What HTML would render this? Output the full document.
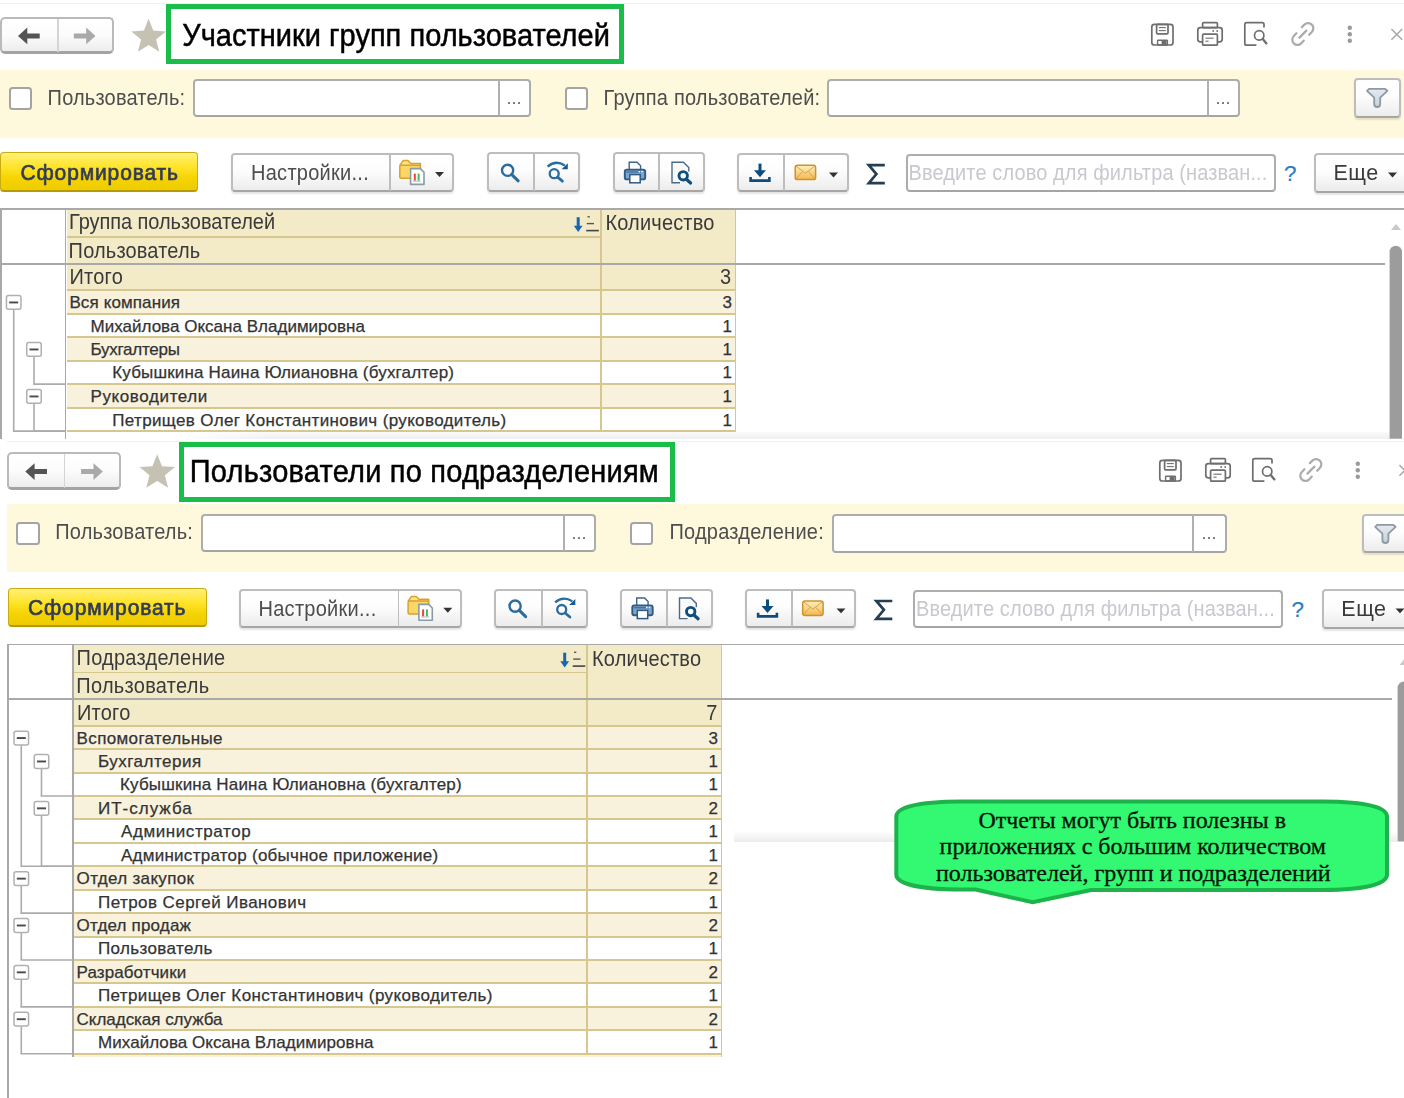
<!DOCTYPE html><html><head><meta charset="utf-8"><style>html,body{margin:0;padding:0;background:#fff;width:1404px;height:1098px;overflow:hidden;}body{position:relative;font-family:"Liberation Sans",sans-serif;}.a{position:absolute;}.t{position:absolute;white-space:pre;line-height:1;}svg{position:absolute;left:0;top:0;}</style></head><body>
<div class="a" style="left:0.00px;top:2.50px;width:1404.00px;height:1.00px;background:#f0f0f0;"></div>
<div class="a" style="left:7.00px;top:440.50px;width:1397.00px;height:1.00px;background:#f0f0f0;"></div>
<div class="a" style="left:0.00px;top:17.00px;width:113.50px;height:37.20px;box-sizing:border-box;border:2px solid #bababa;border-bottom:3px solid #a3a3a3;border-radius:5px;background:linear-gradient(#fff 0%,#fcfcfc 50%,#ededed 100%);"></div>
<div class="a" style="left:56.80px;top:18.50px;width:1.80px;height:33.70px;background:#d4d4d4;"></div>
<div class="a" style="left:6.80px;top:452.20px;width:114.60px;height:37.60px;box-sizing:border-box;border:2px solid #bababa;border-bottom:3px solid #a3a3a3;border-radius:5px;background:linear-gradient(#fff 0%,#fcfcfc 50%,#ededed 100%);"></div>
<div class="a" style="left:63.70px;top:453.70px;width:1.80px;height:34.10px;background:#d4d4d4;"></div>
<div class="a" style="left:166.00px;top:4.00px;width:457.50px;height:59.50px;box-sizing:border-box;border:5px solid #1bbd4a;"></div>
<div class="a" style="left:179.00px;top:442.00px;width:496.00px;height:60.00px;box-sizing:border-box;border:5px solid #1bbd4a;"></div>
<div class="a" style="left:0.00px;top:69.50px;width:1404.00px;height:68.70px;background:#fef9dc;"></div>
<div class="a" style="left:7.00px;top:504.40px;width:1397.00px;height:68.00px;background:#fef9dc;"></div>
<div class="a" style="left:8.80px;top:86.70px;width:23.00px;height:23.10px;box-sizing:border-box;border:2.2px solid #a4a4a4;border-radius:3.5px;background:#fff;"></div>
<div class="a" style="left:193.00px;top:78.80px;width:338.00px;height:38.60px;box-sizing:border-box;border:2.2px solid #adadad;border-bottom:2.4px solid #a5a5a5;border-radius:4px;background:#fff;"></div>
<div class="a" style="left:497.50px;top:79.80px;width:2.00px;height:36.60px;background:#b0b0b0;"></div>
<div class="a" style="left:508.05px;top:102.20px;width:1.80px;height:1.80px;background:#6e6e6e;border-radius:0.4px;"></div>
<div class="a" style="left:513.05px;top:102.20px;width:1.80px;height:1.80px;background:#6e6e6e;border-radius:0.4px;"></div>
<div class="a" style="left:518.05px;top:102.20px;width:1.80px;height:1.80px;background:#6e6e6e;border-radius:0.4px;"></div>
<div class="a" style="left:564.60px;top:86.70px;width:23.10px;height:23.10px;box-sizing:border-box;border:2.2px solid #a4a4a4;border-radius:3.5px;background:#fff;"></div>
<div class="a" style="left:827.40px;top:78.80px;width:413.00px;height:38.60px;box-sizing:border-box;border:2.2px solid #adadad;border-bottom:2.4px solid #a5a5a5;border-radius:4px;background:#fff;"></div>
<div class="a" style="left:1206.90px;top:79.80px;width:2.00px;height:36.60px;background:#b0b0b0;"></div>
<div class="a" style="left:1217.45px;top:102.20px;width:1.80px;height:1.80px;background:#6e6e6e;border-radius:0.4px;"></div>
<div class="a" style="left:1222.45px;top:102.20px;width:1.80px;height:1.80px;background:#6e6e6e;border-radius:0.4px;"></div>
<div class="a" style="left:1227.45px;top:102.20px;width:1.80px;height:1.80px;background:#6e6e6e;border-radius:0.4px;"></div>
<div class="a" style="left:1354.00px;top:77.70px;width:46.50px;height:40.10px;box-sizing:border-box;border:2px solid #bdbdbd;border-bottom:2.6px solid #a6a6a6;border-radius:4px;background:linear-gradient(#ffffff 0%,#fdfdfd 45%,#ececec 100%);box-shadow:0 1.5px 1.5px rgba(0,0,0,0.10);"></div>
<div class="a" style="left:16.20px;top:521.80px;width:23.50px;height:22.80px;box-sizing:border-box;border:2.2px solid #a4a4a4;border-radius:3.5px;background:#fff;"></div>
<div class="a" style="left:201.40px;top:513.80px;width:394.60px;height:38.60px;box-sizing:border-box;border:2.2px solid #adadad;border-bottom:2.4px solid #a5a5a5;border-radius:4px;background:#fff;"></div>
<div class="a" style="left:562.80px;top:514.80px;width:2.00px;height:36.60px;background:#b0b0b0;"></div>
<div class="a" style="left:573.20px;top:537.20px;width:1.80px;height:1.80px;background:#6e6e6e;border-radius:0.4px;"></div>
<div class="a" style="left:578.20px;top:537.20px;width:1.80px;height:1.80px;background:#6e6e6e;border-radius:0.4px;"></div>
<div class="a" style="left:583.20px;top:537.20px;width:1.80px;height:1.80px;background:#6e6e6e;border-radius:0.4px;"></div>
<div class="a" style="left:630.00px;top:522.30px;width:23.00px;height:22.70px;box-sizing:border-box;border:2.2px solid #a4a4a4;border-radius:3.5px;background:#fff;"></div>
<div class="a" style="left:832.40px;top:514.00px;width:394.20px;height:38.60px;box-sizing:border-box;border:2.2px solid #adadad;border-bottom:2.4px solid #a5a5a5;border-radius:4px;background:#fff;"></div>
<div class="a" style="left:1192.40px;top:515.00px;width:2.00px;height:36.60px;background:#b0b0b0;"></div>
<div class="a" style="left:1203.30px;top:537.40px;width:1.80px;height:1.80px;background:#6e6e6e;border-radius:0.4px;"></div>
<div class="a" style="left:1208.30px;top:537.40px;width:1.80px;height:1.80px;background:#6e6e6e;border-radius:0.4px;"></div>
<div class="a" style="left:1213.30px;top:537.40px;width:1.80px;height:1.80px;background:#6e6e6e;border-radius:0.4px;"></div>
<div class="a" style="left:1362.20px;top:513.80px;width:47.80px;height:39.00px;box-sizing:border-box;border:2px solid #bdbdbd;border-bottom:2.6px solid #a6a6a6;border-radius:4px;background:linear-gradient(#ffffff 0%,#fdfdfd 45%,#ececec 100%);box-shadow:0 1.5px 1.5px rgba(0,0,0,0.10);"></div>
<div class="a" style="left:0.00px;top:152.30px;width:198.00px;height:40.20px;box-sizing:border-box;border:1.6px solid #c9ad10;border-bottom:2.4px solid #b59a00;border-radius:4px;background:linear-gradient(#fff07a 0%,#ffe52e 35%,#f5d300 70%,#eecb00 100%);"></div>
<div class="a" style="left:231.00px;top:152.50px;width:223.00px;height:39.80px;box-sizing:border-box;border:2px solid #bdbdbd;border-bottom:2.6px solid #a6a6a6;border-radius:4px;background:linear-gradient(#ffffff 0%,#fdfdfd 45%,#ececec 100%);box-shadow:0 1.5px 1.5px rgba(0,0,0,0.10);"></div>
<div class="a" style="left:389.20px;top:153.50px;width:1.60px;height:37.80px;background:#bdbdbd;"></div>
<div class="a" style="left:487.00px;top:152.30px;width:92.80px;height:40.20px;box-sizing:border-box;border:2px solid #bdbdbd;border-bottom:2.6px solid #a6a6a6;border-radius:4px;background:linear-gradient(#ffffff 0%,#fdfdfd 45%,#ececec 100%);box-shadow:0 1.5px 1.5px rgba(0,0,0,0.10);"></div>
<div class="a" style="left:533.20px;top:153.30px;width:1.60px;height:38.20px;background:#bdbdbd;"></div>
<div class="a" style="left:612.50px;top:152.30px;width:92.00px;height:40.20px;box-sizing:border-box;border:2px solid #bdbdbd;border-bottom:2.6px solid #a6a6a6;border-radius:4px;background:linear-gradient(#ffffff 0%,#fdfdfd 45%,#ececec 100%);box-shadow:0 1.5px 1.5px rgba(0,0,0,0.10);"></div>
<div class="a" style="left:658.20px;top:153.30px;width:1.60px;height:38.20px;background:#bdbdbd;"></div>
<div class="a" style="left:737.00px;top:152.50px;width:111.50px;height:39.80px;box-sizing:border-box;border:2px solid #bdbdbd;border-bottom:2.6px solid #a6a6a6;border-radius:4px;background:linear-gradient(#ffffff 0%,#fdfdfd 45%,#ececec 100%);box-shadow:0 1.5px 1.5px rgba(0,0,0,0.10);"></div>
<div class="a" style="left:783.40px;top:153.50px;width:1.60px;height:37.80px;background:#bdbdbd;"></div>
<div class="a" style="left:905.50px;top:154.20px;width:370.00px;height:38.20px;box-sizing:border-box;border:2.2px solid #adadad;border-bottom:2.4px solid #a5a5a5;border-radius:4px;background:#fff;"></div>
<div class="a" style="left:1313.60px;top:152.80px;width:100.40px;height:40.20px;box-sizing:border-box;border:2px solid #bdbdbd;border-bottom:2.6px solid #a6a6a6;border-radius:4px;background:linear-gradient(#ffffff 0%,#fdfdfd 45%,#ececec 100%);box-shadow:0 1.5px 1.5px rgba(0,0,0,0.10);"></div>
<div class="a" style="left:7.50px;top:587.80px;width:199.30px;height:39.70px;box-sizing:border-box;border:1.6px solid #c9ad10;border-bottom:2.4px solid #b59a00;border-radius:4px;background:linear-gradient(#fff07a 0%,#ffe52e 35%,#f5d300 70%,#eecb00 100%);"></div>
<div class="a" style="left:238.60px;top:588.50px;width:223.60px;height:39.00px;box-sizing:border-box;border:2px solid #bdbdbd;border-bottom:2.6px solid #a6a6a6;border-radius:4px;background:linear-gradient(#ffffff 0%,#fdfdfd 45%,#ececec 100%);box-shadow:0 1.5px 1.5px rgba(0,0,0,0.10);"></div>
<div class="a" style="left:397.50px;top:589.50px;width:1.60px;height:37.00px;background:#bdbdbd;"></div>
<div class="a" style="left:494.40px;top:588.50px;width:93.30px;height:39.50px;box-sizing:border-box;border:2px solid #bdbdbd;border-bottom:2.6px solid #a6a6a6;border-radius:4px;background:linear-gradient(#ffffff 0%,#fdfdfd 45%,#ececec 100%);box-shadow:0 1.5px 1.5px rgba(0,0,0,0.10);"></div>
<div class="a" style="left:541.40px;top:589.50px;width:1.60px;height:37.50px;background:#bdbdbd;"></div>
<div class="a" style="left:619.50px;top:588.50px;width:93.00px;height:39.50px;box-sizing:border-box;border:2px solid #bdbdbd;border-bottom:2.6px solid #a6a6a6;border-radius:4px;background:linear-gradient(#ffffff 0%,#fdfdfd 45%,#ececec 100%);box-shadow:0 1.5px 1.5px rgba(0,0,0,0.10);"></div>
<div class="a" style="left:666.20px;top:589.50px;width:1.60px;height:37.50px;background:#bdbdbd;"></div>
<div class="a" style="left:745.00px;top:588.50px;width:111.00px;height:39.50px;box-sizing:border-box;border:2px solid #bdbdbd;border-bottom:2.6px solid #a6a6a6;border-radius:4px;background:linear-gradient(#ffffff 0%,#fdfdfd 45%,#ececec 100%);box-shadow:0 1.5px 1.5px rgba(0,0,0,0.10);"></div>
<div class="a" style="left:791.00px;top:589.50px;width:1.60px;height:37.50px;background:#bdbdbd;"></div>
<div class="a" style="left:913.00px;top:589.90px;width:370.00px;height:38.20px;box-sizing:border-box;border:2.2px solid #adadad;border-bottom:2.4px solid #a5a5a5;border-radius:4px;background:#fff;"></div>
<div class="a" style="left:1321.90px;top:588.50px;width:98.10px;height:40.10px;box-sizing:border-box;border:2px solid #bdbdbd;border-bottom:2.6px solid #a6a6a6;border-radius:4px;background:linear-gradient(#ffffff 0%,#fdfdfd 45%,#ececec 100%);box-shadow:0 1.5px 1.5px rgba(0,0,0,0.10);"></div>
<div class="a" style="left:0.00px;top:208.40px;width:1404.00px;height:1.60px;background:#a9a9a9;"></div>
<div class="a" style="left:66.50px;top:210.00px;width:669.10px;height:52.70px;background:#f3ebc8;"></div>
<div class="a" style="left:66.50px;top:236.30px;width:534.70px;height:1.60px;background:#d6c78e;"></div>
<div class="a" style="left:66.50px;top:264.70px;width:669.10px;height:25.40px;background:#f3ebc8;"></div>
<div class="a" style="left:66.50px;top:290.10px;width:669.10px;height:23.50px;background:#f8f1dc;"></div>
<div class="a" style="left:66.50px;top:289.10px;width:669.10px;height:2.00px;background:#d6c78e;"></div>
<div class="a" style="left:66.50px;top:312.60px;width:669.10px;height:2.00px;background:#d6c78e;"></div>
<div class="a" style="left:66.50px;top:337.10px;width:669.10px;height:23.50px;background:#f8f1dc;"></div>
<div class="a" style="left:66.50px;top:336.10px;width:669.10px;height:2.00px;background:#d6c78e;"></div>
<div class="a" style="left:66.50px;top:359.60px;width:669.10px;height:2.00px;background:#d6c78e;"></div>
<div class="a" style="left:66.50px;top:384.10px;width:669.10px;height:23.50px;background:#f8f1dc;"></div>
<div class="a" style="left:66.50px;top:383.10px;width:669.10px;height:2.00px;background:#d6c78e;"></div>
<div class="a" style="left:66.50px;top:406.60px;width:669.10px;height:2.00px;background:#d6c78e;"></div>
<div class="a" style="left:66.50px;top:430.10px;width:669.10px;height:2.00px;background:#d6c78e;"></div>
<div class="a" style="left:600.20px;top:210.00px;width:2.00px;height:221.10px;background:#d6c78e;"></div>
<div class="a" style="left:734.60px;top:210.00px;width:1.60px;height:222.10px;background:#d6c78e;"></div>
<div class="a" style="left:0.00px;top:262.70px;width:1385.00px;height:2.00px;background:#a9a9a9;"></div>
<div class="a" style="left:0.00px;top:209.20px;width:1.50px;height:229.50px;background:#a9a9a9;"></div>
<div class="a" style="left:64.70px;top:209.20px;width:1.60px;height:229.50px;background:#a9a9a9;"></div>
<div class="a" style="left:7.00px;top:643.60px;width:1397.00px;height:1.60px;background:#a9a9a9;"></div>
<div class="a" style="left:74.00px;top:645.20px;width:647.70px;height:53.20px;background:#f3ebc8;"></div>
<div class="a" style="left:74.00px;top:671.90px;width:513.40px;height:1.60px;background:#d6c78e;"></div>
<div class="a" style="left:74.00px;top:700.40px;width:647.70px;height:25.30px;background:#f3ebc8;"></div>
<div class="a" style="left:74.00px;top:725.70px;width:647.70px;height:23.43px;background:#f8f1dc;"></div>
<div class="a" style="left:74.00px;top:724.70px;width:647.70px;height:2.00px;background:#d6c78e;"></div>
<div class="a" style="left:74.00px;top:749.13px;width:647.70px;height:23.43px;background:#f8f1dc;"></div>
<div class="a" style="left:74.00px;top:748.13px;width:647.70px;height:2.00px;background:#d6c78e;"></div>
<div class="a" style="left:74.00px;top:771.56px;width:647.70px;height:2.00px;background:#d6c78e;"></div>
<div class="a" style="left:74.00px;top:795.99px;width:647.70px;height:23.43px;background:#f8f1dc;"></div>
<div class="a" style="left:74.00px;top:794.99px;width:647.70px;height:2.00px;background:#d6c78e;"></div>
<div class="a" style="left:74.00px;top:818.42px;width:647.70px;height:2.00px;background:#d6c78e;"></div>
<div class="a" style="left:74.00px;top:841.85px;width:647.70px;height:2.00px;background:#d6c78e;"></div>
<div class="a" style="left:74.00px;top:866.28px;width:647.70px;height:23.43px;background:#f8f1dc;"></div>
<div class="a" style="left:74.00px;top:865.28px;width:647.70px;height:2.00px;background:#d6c78e;"></div>
<div class="a" style="left:74.00px;top:888.71px;width:647.70px;height:2.00px;background:#d6c78e;"></div>
<div class="a" style="left:74.00px;top:913.14px;width:647.70px;height:23.43px;background:#f8f1dc;"></div>
<div class="a" style="left:74.00px;top:912.14px;width:647.70px;height:2.00px;background:#d6c78e;"></div>
<div class="a" style="left:74.00px;top:935.57px;width:647.70px;height:2.00px;background:#d6c78e;"></div>
<div class="a" style="left:74.00px;top:960.00px;width:647.70px;height:23.43px;background:#f8f1dc;"></div>
<div class="a" style="left:74.00px;top:959.00px;width:647.70px;height:2.00px;background:#d6c78e;"></div>
<div class="a" style="left:74.00px;top:982.43px;width:647.70px;height:2.00px;background:#d6c78e;"></div>
<div class="a" style="left:74.00px;top:1006.86px;width:647.70px;height:23.43px;background:#f8f1dc;"></div>
<div class="a" style="left:74.00px;top:1005.86px;width:647.70px;height:2.00px;background:#d6c78e;"></div>
<div class="a" style="left:74.00px;top:1029.29px;width:647.70px;height:2.00px;background:#d6c78e;"></div>
<div class="a" style="left:74.00px;top:1052.72px;width:647.70px;height:2.00px;background:#d6c78e;"></div>
<div class="a" style="left:74.00px;top:1054.72px;width:647.70px;height:2.00px;background:#f8f1dc;"></div>
<div class="a" style="left:586.40px;top:645.20px;width:2.00px;height:408.52px;background:#d6c78e;"></div>
<div class="a" style="left:720.70px;top:645.20px;width:1.60px;height:411.52px;background:#d6c78e;"></div>
<div class="a" style="left:7.00px;top:698.40px;width:1385.40px;height:2.00px;background:#a9a9a9;"></div>
<div class="a" style="left:7.00px;top:644.40px;width:1.50px;height:453.60px;background:#a9a9a9;"></div>
<div class="a" style="left:72.20px;top:644.40px;width:1.60px;height:412.30px;background:#a9a9a9;"></div>
<div class="a" style="left:180.00px;top:432.00px;width:1209.60px;height:6.70px;background:linear-gradient(#fafafa,#efefef);-webkit-mask-image:linear-gradient(to right,transparent,#000 90px);"></div>
<div class="a" style="left:734.00px;top:831.00px;width:663.00px;height:10.60px;background:linear-gradient(rgba(240,240,240,0),#ececec);"></div>
<svg width="1404" height="1098" viewBox="0 0 1404 1098"><polygon points="1388,172.6 1397,172.6 1392.5,177.4" fill="#333"/><polygon points="1395.5,608.4 1404.5,608.4 1400,613.2" fill="#333"/><g transform="translate(574,216)"><line x1="4.2" y1="1.2" x2="4.2" y2="11" stroke="#1a66ad" stroke-width="3"/><polygon points="-0.2,9.8 8.6,9.8 4.2,16" fill="#1a66ad"/><line x1="13.5" y1="0.8" x2="15.8" y2="0.8" stroke="#555" stroke-width="1.4"/><line x1="12.7" y1="7.6" x2="20" y2="7.6" stroke="#555" stroke-width="1.4"/><line x1="12.2" y1="14.6" x2="24.8" y2="14.6" stroke="#444" stroke-width="1.6"/></g><line x1="13.7" y1="309.8" x2="13.7" y2="431.1" stroke="#ababab" stroke-width="1.6"/><line x1="12.899999999999999" y1="431.1" x2="65.5" y2="431.1" stroke="#ababab" stroke-width="1.6"/><rect x="6.45" y="295.55" width="14.5" height="13.8" rx="2" fill="#fff" stroke="#b0b0b0" stroke-width="1.5"/><line x1="9.2" y1="302.45" x2="18.2" y2="302.45" stroke="#4a4a4a" stroke-width="1.9"/><line x1="34" y1="356.8" x2="34" y2="384.1" stroke="#ababab" stroke-width="1.6"/><line x1="33.2" y1="384.1" x2="65.5" y2="384.1" stroke="#ababab" stroke-width="1.6"/><rect x="26.75" y="342.55" width="14.5" height="13.8" rx="2" fill="#fff" stroke="#b0b0b0" stroke-width="1.5"/><line x1="29.5" y1="349.45" x2="38.5" y2="349.45" stroke="#4a4a4a" stroke-width="1.9"/><line x1="34" y1="403.8" x2="34" y2="431.1" stroke="#ababab" stroke-width="1.6"/><line x1="33.2" y1="431.1" x2="65.5" y2="431.1" stroke="#ababab" stroke-width="1.6"/><rect x="26.75" y="389.55" width="14.5" height="13.8" rx="2" fill="#fff" stroke="#b0b0b0" stroke-width="1.5"/><line x1="29.5" y1="396.45" x2="38.5" y2="396.45" stroke="#4a4a4a" stroke-width="1.9"/><polygon points="1391,230 1401,230 1396.0,224" fill="#c9c9c9"/><path d="M1389.6,438.7 L1389.6,251.90000000000003 A6.2000000000000455,6.2000000000000455 0 0 1 1402,251.90000000000003 L1402,438.7 Z" fill="#9c9c9c"/><g transform="translate(560.5,651.5)"><line x1="4.2" y1="1.2" x2="4.2" y2="11" stroke="#1a66ad" stroke-width="3"/><polygon points="-0.2,9.8 8.6,9.8 4.2,16" fill="#1a66ad"/><line x1="13.5" y1="0.8" x2="15.8" y2="0.8" stroke="#555" stroke-width="1.4"/><line x1="12.7" y1="7.6" x2="20" y2="7.6" stroke="#555" stroke-width="1.4"/><line x1="12.2" y1="14.6" x2="24.8" y2="14.6" stroke="#444" stroke-width="1.6"/></g><line x1="21.3" y1="745.4000000000001" x2="21.3" y2="866.28" stroke="#ababab" stroke-width="1.6"/><line x1="20.5" y1="866.28" x2="73" y2="866.28" stroke="#ababab" stroke-width="1.6"/><rect x="14.05" y="731.1500000000001" width="14.5" height="13.8" rx="2" fill="#fff" stroke="#b0b0b0" stroke-width="1.5"/><line x1="16.8" y1="738.0500000000001" x2="25.8" y2="738.0500000000001" stroke="#4a4a4a" stroke-width="1.9"/><line x1="41.5" y1="768.83" x2="41.5" y2="795.99" stroke="#ababab" stroke-width="1.6"/><line x1="40.7" y1="795.99" x2="73" y2="795.99" stroke="#ababab" stroke-width="1.6"/><rect x="34.25" y="754.58" width="14.5" height="13.8" rx="2" fill="#fff" stroke="#b0b0b0" stroke-width="1.5"/><line x1="37.0" y1="761.48" x2="46.0" y2="761.48" stroke="#4a4a4a" stroke-width="1.9"/><line x1="41.5" y1="815.69" x2="41.5" y2="866.28" stroke="#ababab" stroke-width="1.6"/><line x1="40.7" y1="866.28" x2="73" y2="866.28" stroke="#ababab" stroke-width="1.6"/><rect x="34.25" y="801.44" width="14.5" height="13.8" rx="2" fill="#fff" stroke="#b0b0b0" stroke-width="1.5"/><line x1="37.0" y1="808.34" x2="46.0" y2="808.34" stroke="#4a4a4a" stroke-width="1.9"/><line x1="21.3" y1="885.98" x2="21.3" y2="913.1400000000001" stroke="#ababab" stroke-width="1.6"/><line x1="20.5" y1="913.1400000000001" x2="73" y2="913.1400000000001" stroke="#ababab" stroke-width="1.6"/><rect x="14.05" y="871.73" width="14.5" height="13.8" rx="2" fill="#fff" stroke="#b0b0b0" stroke-width="1.5"/><line x1="16.8" y1="878.63" x2="25.8" y2="878.63" stroke="#4a4a4a" stroke-width="1.9"/><line x1="21.3" y1="932.8400000000001" x2="21.3" y2="960.0" stroke="#ababab" stroke-width="1.6"/><line x1="20.5" y1="960.0" x2="73" y2="960.0" stroke="#ababab" stroke-width="1.6"/><rect x="14.05" y="918.5900000000001" width="14.5" height="13.8" rx="2" fill="#fff" stroke="#b0b0b0" stroke-width="1.5"/><line x1="16.8" y1="925.4900000000001" x2="25.8" y2="925.4900000000001" stroke="#4a4a4a" stroke-width="1.9"/><line x1="21.3" y1="979.7" x2="21.3" y2="1006.86" stroke="#ababab" stroke-width="1.6"/><line x1="20.5" y1="1006.86" x2="73" y2="1006.86" stroke="#ababab" stroke-width="1.6"/><rect x="14.05" y="965.45" width="14.5" height="13.8" rx="2" fill="#fff" stroke="#b0b0b0" stroke-width="1.5"/><line x1="16.8" y1="972.35" x2="25.8" y2="972.35" stroke="#4a4a4a" stroke-width="1.9"/><line x1="21.3" y1="1026.56" x2="21.3" y2="1053.72" stroke="#ababab" stroke-width="1.6"/><line x1="20.5" y1="1053.72" x2="73" y2="1053.72" stroke="#ababab" stroke-width="1.6"/><rect x="14.05" y="1012.3100000000001" width="14.5" height="13.8" rx="2" fill="#fff" stroke="#b0b0b0" stroke-width="1.5"/><line x1="16.8" y1="1019.21" x2="25.8" y2="1019.21" stroke="#4a4a4a" stroke-width="1.9"/><polygon points="1399.5,665 1409.5,665 1404.5,659" fill="#c9c9c9"/><path d="M1397.6,841.6 L1397.6,687.8000000000001 A6.2000000000000455,6.2000000000000455 0 0 1 1410,687.8000000000001 L1410,841.6 Z" fill="#9c9c9c"/><g transform="translate(0,0)"><path d="M18,36 L27.3,27.6 L27.3,33.4 L39.7,33.4 L39.7,38.4 L27.3,38.4 L27.3,44.3 Z" fill="#545454"/><path d="M95.5,36 L86.2,27.6 L86.2,33.4 L73.8,33.4 L73.8,38.4 L86.2,38.4 L86.2,44.3 Z" fill="#a9a9a9"/></g><g transform="translate(7.3,435.6)"><path d="M18,36 L27.3,27.6 L27.3,33.4 L39.7,33.4 L39.7,38.4 L27.3,38.4 L27.3,44.3 Z" fill="#545454"/><path d="M95.5,36 L86.2,27.6 L86.2,33.4 L73.8,33.4 L73.8,38.4 L86.2,38.4 L86.2,44.3 Z" fill="#a9a9a9"/></g><polygon points="148.60,18.80 153.24,30.61 165.91,31.38 156.11,39.44 159.30,51.72 148.60,44.90 137.90,51.72 141.09,39.44 131.29,31.38 143.96,30.61" fill="#c5c1b3"/><polygon points="157.20,454.20 161.96,466.25 174.89,467.05 164.90,475.30 168.13,487.85 157.20,480.90 146.27,487.85 149.50,475.30 139.51,467.05 152.44,466.25" fill="#c5c1b3"/><g transform="translate(0,0)" fill="none" stroke="#6e6e6e" stroke-width="1.7"><rect x="1151.8" y="24.4" width="21.2" height="20.6" rx="2.6"/><rect x="1156.6" y="24.4" width="11.4" height="9.4" rx="1"/><line x1="1158.8" y1="27.6" x2="1165.8" y2="27.6" stroke-width="1.1"/><line x1="1158.8" y1="30.6" x2="1165.8" y2="30.6" stroke-width="1.1"/><rect x="1157.6" y="40.2" width="9.8" height="4.8" rx="0.5" stroke-width="1.4"/><rect x="1161.6" y="41" width="5" height="3.6" fill="#6e6e6e" stroke="none"/><rect x="1202.6" y="22.6" width="14.8" height="5" rx="1"/><rect x="1197.8" y="27.6" width="24.4" height="14.2" rx="2.6"/><rect x="1202.6" y="34.2" width="14.8" height="11" rx="1" fill="#fff"/><line x1="1205.4" y1="38.2" x2="1213.6" y2="38.2" stroke-width="1.1"/><line x1="1205.4" y1="41.2" x2="1208.6" y2="41.2" stroke-width="1.1"/><circle cx="1213.2" cy="31" r="0.9" fill="#6e6e6e" stroke="none"/><circle cx="1217.2" cy="31" r="0.9" fill="#6e6e6e" stroke="none"/><path d="M1264,27.5 L1264,24.4 Q1264,22.6 1262.2,22.6 L1246.6,22.6 Q1244.8,22.6 1244.8,24.4 L1244.8,43.4 Q1244.8,45.2 1246.6,45.2 L1256.4,45.2"/><circle cx="1259.2" cy="35.4" r="4.7"/><line x1="1262.6" y1="38.8" x2="1266.4" y2="43.4" stroke-width="2.3" stroke-linecap="round"/></g><g transform="translate(0,0)" fill="none" stroke="#ababab" stroke-width="2.2" stroke-linecap="round"><path d="M1301.8,27.2 L1304.4,24.6 A5.2,5.2 0 0 1 1311.8,32 L1309.2,34.8"/><path d="M1303.8,40.6 L1301.2,43.4 A5.2,5.2 0 0 1 1293.8,36 L1296.4,33.2"/><line x1="1299.4" y1="37.6" x2="1306.4" y2="30.6"/></g><g transform="translate(0,0)"><circle cx="1349.8" cy="27.8" r="2.2" fill="#9a9a9a"/><circle cx="1349.8" cy="34.3" r="2.2" fill="#9a9a9a"/><circle cx="1349.8" cy="40.7" r="2.2" fill="#9a9a9a"/><path d="M1391.4,29 L1402.2,39.8 M1402.2,29 L1391.4,39.8" stroke="#a8a8a8" stroke-width="1.5"/></g><g transform="translate(8,436)" fill="none" stroke="#6e6e6e" stroke-width="1.7"><rect x="1151.8" y="24.4" width="21.2" height="20.6" rx="2.6"/><rect x="1156.6" y="24.4" width="11.4" height="9.4" rx="1"/><line x1="1158.8" y1="27.6" x2="1165.8" y2="27.6" stroke-width="1.1"/><line x1="1158.8" y1="30.6" x2="1165.8" y2="30.6" stroke-width="1.1"/><rect x="1157.6" y="40.2" width="9.8" height="4.8" rx="0.5" stroke-width="1.4"/><rect x="1161.6" y="41" width="5" height="3.6" fill="#6e6e6e" stroke="none"/><rect x="1202.6" y="22.6" width="14.8" height="5" rx="1"/><rect x="1197.8" y="27.6" width="24.4" height="14.2" rx="2.6"/><rect x="1202.6" y="34.2" width="14.8" height="11" rx="1" fill="#fff"/><line x1="1205.4" y1="38.2" x2="1213.6" y2="38.2" stroke-width="1.1"/><line x1="1205.4" y1="41.2" x2="1208.6" y2="41.2" stroke-width="1.1"/><circle cx="1213.2" cy="31" r="0.9" fill="#6e6e6e" stroke="none"/><circle cx="1217.2" cy="31" r="0.9" fill="#6e6e6e" stroke="none"/><path d="M1264,27.5 L1264,24.4 Q1264,22.6 1262.2,22.6 L1246.6,22.6 Q1244.8,22.6 1244.8,24.4 L1244.8,43.4 Q1244.8,45.2 1246.6,45.2 L1256.4,45.2"/><circle cx="1259.2" cy="35.4" r="4.7"/><line x1="1262.6" y1="38.8" x2="1266.4" y2="43.4" stroke-width="2.3" stroke-linecap="round"/></g><g transform="translate(8,436)" fill="none" stroke="#ababab" stroke-width="2.2" stroke-linecap="round"><path d="M1301.8,27.2 L1304.4,24.6 A5.2,5.2 0 0 1 1311.8,32 L1309.2,34.8"/><path d="M1303.8,40.6 L1301.2,43.4 A5.2,5.2 0 0 1 1293.8,36 L1296.4,33.2"/><line x1="1299.4" y1="37.6" x2="1306.4" y2="30.6"/></g><g transform="translate(8,436)"><circle cx="1349.8" cy="27.8" r="2.2" fill="#9a9a9a"/><circle cx="1349.8" cy="34.3" r="2.2" fill="#9a9a9a"/><circle cx="1349.8" cy="40.7" r="2.2" fill="#9a9a9a"/><path d="M1391.4,29 L1402.2,39.8 M1402.2,29 L1391.4,39.8" stroke="#a8a8a8" stroke-width="1.5"/></g><defs><linearGradient id="fg" x1="0" y1="0" x2="0" y2="1"><stop offset="0" stop-color="#e6eaf0"/><stop offset="1" stop-color="#c8d0d8"/></linearGradient><linearGradient id="env" x1="0" y1="0" x2="0" y2="1"><stop offset="0" stop-color="#fff0bf"/><stop offset="1" stop-color="#f2b94f"/></linearGradient></defs><g transform="translate(0,0)"><path d="M1369,88.8 L1384.8,88.8 L1387.4,90.8 L1380.2,97.6 L1380.2,104 A3,3 0 0 1 1374.2,104 L1374.2,97.6 L1367,90.8 Z" fill="url(#fg)" stroke="#8d9aa6" stroke-width="1.8" stroke-linejoin="round"/></g><g transform="translate(8.2,436)"><path d="M1369,88.8 L1384.8,88.8 L1387.4,90.8 L1380.2,97.6 L1380.2,104 A3,3 0 0 1 1374.2,104 L1374.2,97.6 L1367,90.8 Z" fill="url(#fg)" stroke="#8d9aa6" stroke-width="1.8" stroke-linejoin="round"/></g><g transform="translate(0,0)"><path d="M399.8,165.5 L403.2,160.6 L408,160.6 L410.6,163.4 L420.4,163.4 L420.4,166" fill="#ffe680" stroke="#d9a032" stroke-width="1.5" stroke-linejoin="round"/><rect x="399.8" y="165.2" width="20.6" height="13" rx="1.2" fill="#fdd764" stroke="#d9a032" stroke-width="1.5"/><path d="M410.6,168.6 L420.4,168.6 L424,172.2 L424,184.4 L410.6,184.4 Z" fill="#fff" stroke="#8a9aa8" stroke-width="1.6" stroke-linejoin="round"/><rect x="413.8" y="173.6" width="2" height="7" fill="#ee4444"/><rect x="417.6" y="173.6" width="2" height="7" fill="#44bb55"/><line x1="413" y1="181.2" x2="421" y2="181.2" stroke="#9aa" stroke-width="0.8"/><polygon points="435,172 444,172 439.5,177" fill="#333"/></g><g transform="translate(0,0)" fill="none" stroke="#2b6c9e"><circle cx="507.6" cy="170.3" r="5.6" stroke-width="2.4"/><line x1="511.8" y1="174.6" x2="518.2" y2="180.8" stroke-width="3" stroke-linecap="round"/><circle cx="554.2" cy="173.7" r="4.5" stroke-width="2.3"/><line x1="557.6" y1="177.2" x2="562.4" y2="181.2" stroke-width="2.8" stroke-linecap="round"/><path d="M547.6,166.6 Q555.5,159.6 564.8,165.4" stroke-width="2.3"/><polygon points="567.8,163.2 567.8,169.2 561.6,169.2" fill="#1a5a8e" stroke="none"/></g><g transform="translate(0,0)"><path d="M629.2,169.4 L629.2,162.2 L637,162.2 L640.6,165.8 L640.6,169.4" fill="#fff" stroke="#3e6489" stroke-width="1.4"/><rect x="624.8" y="169.6" width="20.4" height="9.8" rx="2" fill="#7ea5cd" stroke="#2e5a85" stroke-width="1.9"/><line x1="626.5" y1="172" x2="643" y2="172" stroke="#2e5a85" stroke-width="1"/><rect x="638.5" y="171" width="1.6" height="1.4" fill="#fff"/><rect x="641.2" y="171" width="1.6" height="1.4" fill="#fff"/><rect x="629.8" y="174.6" width="10.4" height="8.2" fill="#fff" stroke="#2e5a85" stroke-width="1.5"/><path d="M680,182.8 L672,182.8 L672,162.2 L683.4,162.2 L688.8,167.6 L688.8,171.5" fill="#fafafa" stroke="#4d6b87" stroke-width="1.4"/><circle cx="683.2" cy="175.8" r="4.2" fill="#fff" stroke="#0f4e80" stroke-width="2.9"/><line x1="686.4" y1="179.2" x2="690.6" y2="183" stroke="#0f4e80" stroke-width="3.2" stroke-linecap="round"/></g><g transform="translate(0,0)"><line x1="760" y1="163.6" x2="760" y2="172" stroke="#0f4c7e" stroke-width="3"/><polygon points="754,170.2 766,170.2 760,177.2" fill="#0f4c7e"/><path d="M750.6,177 L750.6,180.6 L769.4,180.6 L769.4,177" fill="none" stroke="#0f4c7e" stroke-width="2.6"/><rect x="795.2" y="165.2" width="20.4" height="14.4" rx="2.2" fill="url(#env)" stroke="#d0902e" stroke-width="1.5"/><path d="M796,166 L805.4,173.4 L814.8,166 M796,179 L802.5,171.5 M814.8,179 L808.3,171.5" fill="none" stroke="#dba04a" stroke-width="1"/><polygon points="829,172.6 838,172.6 833.5,177.4" fill="#333"/><path d="M884.8,165.2 L868.8,165.2 L876.4,174 L868.8,183.1 L884.8,183.1" fill="none" stroke="#253f52" stroke-width="2.7" stroke-linejoin="miter"/></g><g transform="translate(8.3,435.8)"><path d="M399.8,165.5 L403.2,160.6 L408,160.6 L410.6,163.4 L420.4,163.4 L420.4,166" fill="#ffe680" stroke="#d9a032" stroke-width="1.5" stroke-linejoin="round"/><rect x="399.8" y="165.2" width="20.6" height="13" rx="1.2" fill="#fdd764" stroke="#d9a032" stroke-width="1.5"/><path d="M410.6,168.6 L420.4,168.6 L424,172.2 L424,184.4 L410.6,184.4 Z" fill="#fff" stroke="#8a9aa8" stroke-width="1.6" stroke-linejoin="round"/><rect x="413.8" y="173.6" width="2" height="7" fill="#ee4444"/><rect x="417.6" y="173.6" width="2" height="7" fill="#44bb55"/><line x1="413" y1="181.2" x2="421" y2="181.2" stroke="#9aa" stroke-width="0.8"/><polygon points="435,172 444,172 439.5,177" fill="#333"/></g><g transform="translate(7.5,435.8)" fill="none" stroke="#2b6c9e"><circle cx="507.6" cy="170.3" r="5.6" stroke-width="2.4"/><line x1="511.8" y1="174.6" x2="518.2" y2="180.8" stroke-width="3" stroke-linecap="round"/><circle cx="554.2" cy="173.7" r="4.5" stroke-width="2.3"/><line x1="557.6" y1="177.2" x2="562.4" y2="181.2" stroke-width="2.8" stroke-linecap="round"/><path d="M547.6,166.6 Q555.5,159.6 564.8,165.4" stroke-width="2.3"/><polygon points="567.8,163.2 567.8,169.2 561.6,169.2" fill="#1a5a8e" stroke="none"/></g><g transform="translate(7.5,435.8)"><path d="M629.2,169.4 L629.2,162.2 L637,162.2 L640.6,165.8 L640.6,169.4" fill="#fff" stroke="#3e6489" stroke-width="1.4"/><rect x="624.8" y="169.6" width="20.4" height="9.8" rx="2" fill="#7ea5cd" stroke="#2e5a85" stroke-width="1.9"/><line x1="626.5" y1="172" x2="643" y2="172" stroke="#2e5a85" stroke-width="1"/><rect x="638.5" y="171" width="1.6" height="1.4" fill="#fff"/><rect x="641.2" y="171" width="1.6" height="1.4" fill="#fff"/><rect x="629.8" y="174.6" width="10.4" height="8.2" fill="#fff" stroke="#2e5a85" stroke-width="1.5"/><path d="M680,182.8 L672,182.8 L672,162.2 L683.4,162.2 L688.8,167.6 L688.8,171.5" fill="#fafafa" stroke="#4d6b87" stroke-width="1.4"/><circle cx="683.2" cy="175.8" r="4.2" fill="#fff" stroke="#0f4e80" stroke-width="2.9"/><line x1="686.4" y1="179.2" x2="690.6" y2="183" stroke="#0f4e80" stroke-width="3.2" stroke-linecap="round"/></g><g transform="translate(7.5,435.8)"><line x1="760" y1="163.6" x2="760" y2="172" stroke="#0f4c7e" stroke-width="3"/><polygon points="754,170.2 766,170.2 760,177.2" fill="#0f4c7e"/><path d="M750.6,177 L750.6,180.6 L769.4,180.6 L769.4,177" fill="none" stroke="#0f4c7e" stroke-width="2.6"/><rect x="795.2" y="165.2" width="20.4" height="14.4" rx="2.2" fill="url(#env)" stroke="#d0902e" stroke-width="1.5"/><path d="M796,166 L805.4,173.4 L814.8,166 M796,179 L802.5,171.5 M814.8,179 L808.3,171.5" fill="none" stroke="#dba04a" stroke-width="1"/><polygon points="829,172.6 838,172.6 833.5,177.4" fill="#333"/><path d="M884.8,165.2 L868.8,165.2 L876.4,174 L868.8,183.1 L884.8,183.1" fill="none" stroke="#253f52" stroke-width="2.7" stroke-linejoin="miter"/></g><path d="M961,801.4 L1323,801.4 C1361,801.6 1387,806 1387,816.5 L1387,874.5 C1387,885 1361,889.8 1323,890 L1091,890 L1032.6,902.2 L975.6,889.6 L961,889.6 C923,889.4 896.3,884.5 896.3,874.5 L896.3,816.5 C896.3,806 923,801.6 961,801.4 Z" fill="#33f871" stroke="#1db34a" stroke-width="4"/></svg>
<div class="t" style="left:182.20px;top:22.00px;font-size:29px;color:#000;letter-spacing:0.018px;-webkit-text-stroke:0.45px #000;transform:scaleY(1.1);transform-origin:0 24px;">Участники групп пользователей</div>
<div class="t" style="left:189.80px;top:458.00px;font-size:29px;color:#000;letter-spacing:0.207px;-webkit-text-stroke:0.45px #000;transform:scaleY(1.09);transform-origin:0 24px;">Пользователи по подразделениям</div>
<div class="t" style="left:47.60px;top:88.00px;font-size:20px;color:#4d4d4d;letter-spacing:0.183px;transform:scaleY(1.09);transform-origin:0 17px;">Пользователь:</div>
<div class="t" style="left:603.60px;top:88.00px;font-size:20px;color:#4d4d4d;letter-spacing:0.195px;transform:scaleY(1.09);transform-origin:0 17px;">Группа пользователей:</div>
<div class="t" style="left:55.30px;top:522.00px;font-size:20px;color:#4d4d4d;letter-spacing:0.183px;transform:scaleY(1.09);transform-origin:0 17px;">Пользователь:</div>
<div class="t" style="left:669.40px;top:522.00px;font-size:20px;color:#4d4d4d;letter-spacing:0.231px;transform:scaleY(1.09);transform-origin:0 17px;">Подразделение:</div>
<div class="t" style="left:20.40px;top:162.00px;font-size:21px;color:#323c55;letter-spacing:0.873px;-webkit-text-stroke:0.65px #323c55;transform:scaleY(1.08);transform-origin:0 18px;">Сформировать</div>
<div class="t" style="left:251.00px;top:163.00px;font-size:20px;color:#4d4d4d;letter-spacing:0.273px;transform:scaleY(1.09);transform-origin:0 17px;">Настройки...</div>
<div class="t" style="left:908.50px;top:163.00px;font-size:20px;color:#cbc7cf;letter-spacing:0.114px;transform:scaleY(1.09);transform-origin:0 17px;">Введите слово для фильтра (назван...</div>
<div class="t" style="left:1284.00px;top:163.00px;font-size:22.5px;color:#2b7ec3;-webkit-text-stroke:0.2px #2b7ec3;">?</div>
<div class="t" style="left:1333.50px;top:163.00px;font-size:21.5px;color:#3a3a3a;letter-spacing:0.500px;transform:scaleY(1.05);transform-origin:0 17px;">Еще</div>
<div class="t" style="left:27.90px;top:597.00px;font-size:21px;color:#323c55;letter-spacing:0.873px;-webkit-text-stroke:0.65px #323c55;transform:scaleY(1.08);transform-origin:0 18px;">Сформировать</div>
<div class="t" style="left:258.50px;top:599.00px;font-size:20px;color:#4d4d4d;letter-spacing:0.273px;transform:scaleY(1.09);transform-origin:0 17px;">Настройки...</div>
<div class="t" style="left:916.00px;top:599.00px;font-size:20px;color:#cbc7cf;letter-spacing:0.114px;transform:scaleY(1.09);transform-origin:0 17px;">Введите слово для фильтра (назван...</div>
<div class="t" style="left:1291.50px;top:599.00px;font-size:22.5px;color:#2b7ec3;-webkit-text-stroke:0.2px #2b7ec3;">?</div>
<div class="t" style="left:1341.30px;top:599.00px;font-size:21.5px;color:#3a3a3a;letter-spacing:0.500px;transform:scaleY(1.05);transform-origin:0 17px;">Еще</div>
<div class="t" style="left:69.00px;top:212.00px;font-size:20px;color:#3a3a3a;letter-spacing:-0.053px;transform:scaleY(1.06);transform-origin:0 17px;">Группа пользователей</div>
<div class="t" style="left:68.60px;top:241.00px;font-size:20px;color:#3a3a3a;letter-spacing:0.164px;transform:scaleY(1.06);transform-origin:0 17px;">Пользователь</div>
<div class="t" style="left:605.40px;top:213.00px;font-size:20px;color:#3a3a3a;letter-spacing:0.178px;transform:scaleY(1.06);transform-origin:0 17px;">Количество</div>
<div class="t" style="left:69.40px;top:267.00px;font-size:20px;color:#3a3a3a;letter-spacing:0.250px;transform:scaleY(1.06);transform-origin:0 17px;">Итого</div>
<div class="t" style="left:720.00px;top:267.00px;font-size:20px;color:#3a3a3a;transform:scaleY(1.06);transform-origin:0 17px;">3</div>
<div class="t" style="left:69.40px;top:294.00px;font-size:17px;color:#333333;letter-spacing:0.118px;-webkit-text-stroke:0.25px #333;">Вся компания</div>
<div class="t" style="left:722.60px;top:294.00px;font-size:17px;color:#333333;-webkit-text-stroke:0.25px #333;">3</div>
<div class="t" style="left:90.50px;top:318.00px;font-size:17px;color:#333333;letter-spacing:0.018px;-webkit-text-stroke:0.25px #333;">Михайлова Оксана Владимировна</div>
<div class="t" style="left:722.60px;top:318.00px;font-size:17px;color:#333333;-webkit-text-stroke:0.25px #333;">1</div>
<div class="t" style="left:90.50px;top:341.00px;font-size:17px;color:#333333;letter-spacing:-0.256px;-webkit-text-stroke:0.25px #333;">Бухгалтеры</div>
<div class="t" style="left:722.60px;top:341.00px;font-size:17px;color:#333333;-webkit-text-stroke:0.25px #333;">1</div>
<div class="t" style="left:112.20px;top:364.00px;font-size:17px;color:#333333;letter-spacing:0.172px;-webkit-text-stroke:0.25px #333;">Кубышкина Наина Юлиановна (бухгалтер)</div>
<div class="t" style="left:722.60px;top:364.00px;font-size:17px;color:#333333;-webkit-text-stroke:0.25px #333;">1</div>
<div class="t" style="left:90.50px;top:388.00px;font-size:17px;color:#333333;letter-spacing:0.609px;-webkit-text-stroke:0.25px #333;">Руководители</div>
<div class="t" style="left:722.60px;top:388.00px;font-size:17px;color:#333333;-webkit-text-stroke:0.25px #333;">1</div>
<div class="t" style="left:112.20px;top:412.00px;font-size:17px;color:#333333;letter-spacing:0.357px;-webkit-text-stroke:0.25px #333;">Петрищев Олег Константинович (руководитель)</div>
<div class="t" style="left:722.60px;top:412.00px;font-size:17px;color:#333333;-webkit-text-stroke:0.25px #333;">1</div>
<div class="t" style="left:76.50px;top:648.00px;font-size:20px;color:#3a3a3a;letter-spacing:0.250px;transform:scaleY(1.06);transform-origin:0 17px;">Подразделение</div>
<div class="t" style="left:76.30px;top:676.00px;font-size:20px;color:#3a3a3a;letter-spacing:0.273px;transform:scaleY(1.06);transform-origin:0 17px;">Пользователь</div>
<div class="t" style="left:592.00px;top:649.00px;font-size:20px;color:#3a3a3a;letter-spacing:0.178px;transform:scaleY(1.06);transform-origin:0 17px;">Количество</div>
<div class="t" style="left:76.90px;top:703.00px;font-size:20px;color:#3a3a3a;letter-spacing:0.250px;transform:scaleY(1.06);transform-origin:0 17px;">Итого</div>
<div class="t" style="left:706.20px;top:703.00px;font-size:20px;color:#3a3a3a;transform:scaleY(1.06);transform-origin:0 17px;">7</div>
<div class="t" style="left:76.60px;top:730.00px;font-size:17px;color:#333333;letter-spacing:0.357px;-webkit-text-stroke:0.25px #333;">Вспомогательные</div>
<div class="t" style="left:708.60px;top:730.00px;font-size:17px;color:#333333;-webkit-text-stroke:0.25px #333;">3</div>
<div class="t" style="left:98.00px;top:753.00px;font-size:17px;color:#333333;letter-spacing:0.500px;-webkit-text-stroke:0.25px #333;">Бухгалтерия</div>
<div class="t" style="left:708.60px;top:753.00px;font-size:17px;color:#333333;-webkit-text-stroke:0.25px #333;">1</div>
<div class="t" style="left:120.00px;top:776.00px;font-size:17px;color:#333333;letter-spacing:0.167px;-webkit-text-stroke:0.25px #333;">Кубышкина Наина Юлиановна (бухгалтер)</div>
<div class="t" style="left:708.60px;top:776.00px;font-size:17px;color:#333333;-webkit-text-stroke:0.25px #333;">1</div>
<div class="t" style="left:98.00px;top:800.00px;font-size:17px;color:#333333;letter-spacing:1.000px;-webkit-text-stroke:0.25px #333;">ИТ-служба</div>
<div class="t" style="left:708.60px;top:800.00px;font-size:17px;color:#333333;-webkit-text-stroke:0.25px #333;">2</div>
<div class="t" style="left:121.00px;top:823.00px;font-size:17px;color:#333333;letter-spacing:0.583px;-webkit-text-stroke:0.25px #333;">Администратор</div>
<div class="t" style="left:708.60px;top:823.00px;font-size:17px;color:#333333;-webkit-text-stroke:0.25px #333;">1</div>
<div class="t" style="left:121.00px;top:847.00px;font-size:17px;color:#333333;letter-spacing:0.258px;-webkit-text-stroke:0.25px #333;">Администратор (обычное приложение)</div>
<div class="t" style="left:708.60px;top:847.00px;font-size:17px;color:#333333;-webkit-text-stroke:0.25px #333;">1</div>
<div class="t" style="left:76.60px;top:870.00px;font-size:17px;color:#333333;letter-spacing:0.333px;-webkit-text-stroke:0.25px #333;">Отдел закупок</div>
<div class="t" style="left:708.60px;top:870.00px;font-size:17px;color:#333333;-webkit-text-stroke:0.25px #333;">2</div>
<div class="t" style="left:98.00px;top:894.00px;font-size:17px;color:#333333;letter-spacing:0.429px;-webkit-text-stroke:0.25px #333;">Петров Сергей Иванович</div>
<div class="t" style="left:708.60px;top:894.00px;font-size:17px;color:#333333;-webkit-text-stroke:0.25px #333;">1</div>
<div class="t" style="left:76.60px;top:917.00px;font-size:17px;color:#333333;letter-spacing:0.182px;-webkit-text-stroke:0.25px #333;">Отдел продаж</div>
<div class="t" style="left:708.60px;top:917.00px;font-size:17px;color:#333333;-webkit-text-stroke:0.25px #333;">2</div>
<div class="t" style="left:98.00px;top:940.00px;font-size:17px;color:#333333;letter-spacing:0.364px;-webkit-text-stroke:0.25px #333;">Пользователь</div>
<div class="t" style="left:708.60px;top:940.00px;font-size:17px;color:#333333;-webkit-text-stroke:0.25px #333;">1</div>
<div class="t" style="left:76.60px;top:964.00px;font-size:17px;color:#333333;letter-spacing:0.091px;-webkit-text-stroke:0.25px #333;">Разработчики</div>
<div class="t" style="left:708.60px;top:964.00px;font-size:17px;color:#333333;-webkit-text-stroke:0.25px #333;">2</div>
<div class="t" style="left:98.00px;top:987.00px;font-size:17px;color:#333333;letter-spacing:0.371px;-webkit-text-stroke:0.25px #333;">Петрищев Олег Константинович (руководитель)</div>
<div class="t" style="left:708.60px;top:987.00px;font-size:17px;color:#333333;-webkit-text-stroke:0.25px #333;">1</div>
<div class="t" style="left:76.60px;top:1011.00px;font-size:17px;color:#333333;letter-spacing:-0.033px;-webkit-text-stroke:0.25px #333;">Складская служба</div>
<div class="t" style="left:708.60px;top:1011.00px;font-size:17px;color:#333333;-webkit-text-stroke:0.25px #333;">2</div>
<div class="t" style="left:98.00px;top:1034.00px;font-size:17px;color:#333333;letter-spacing:0.057px;-webkit-text-stroke:0.25px #333;">Михайлова Оксана Владимировна</div>
<div class="t" style="left:708.60px;top:1034.00px;font-size:17px;color:#333333;-webkit-text-stroke:0.25px #333;">1</div>
<div class="t" style="left:978.40px;top:808.00px;font-size:24px;color:#051405;font-family:'Liberation Serif',serif;-webkit-text-stroke:0.3px #051405;">Отчеты могут быть полезны в</div>
<div class="t" style="left:939.60px;top:834.00px;font-size:24px;color:#051405;font-family:'Liberation Serif',serif;letter-spacing:-0.050px;-webkit-text-stroke:0.3px #051405;">приложениях с большим количеством</div>
<div class="t" style="left:936.00px;top:861.00px;font-size:24px;color:#051405;font-family:'Liberation Serif',serif;-webkit-text-stroke:0.3px #051405;">пользователей, групп и подразделений</div>
</body></html>
